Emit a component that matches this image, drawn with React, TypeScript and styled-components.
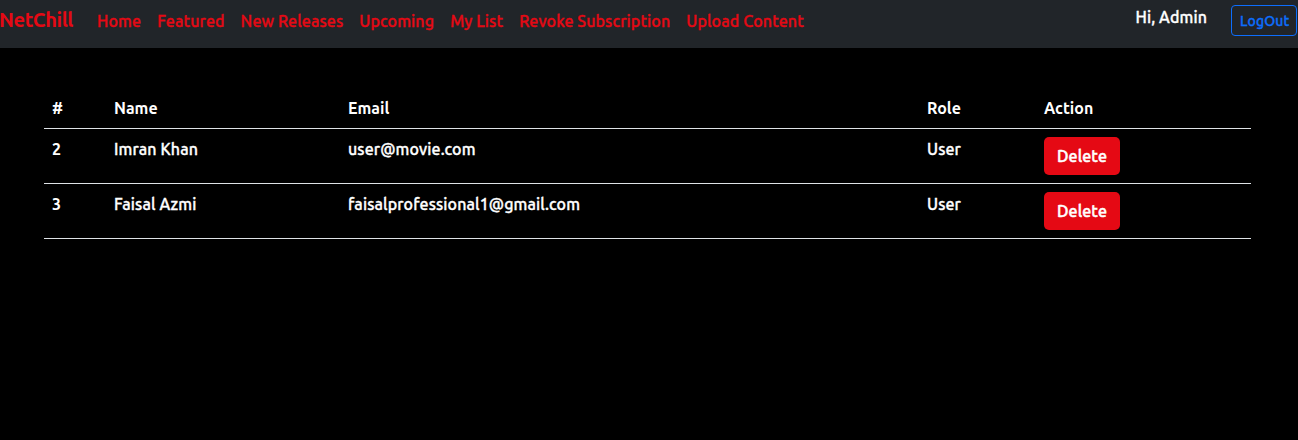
import React from "react";
import styled, { createGlobalStyle, css } from "styled-components";

const Global = createGlobalStyle`
  html, body { margin: 0; padding: 0; background: #000; }
  body {
    font-family: "Ubuntu", "Open Sans", "Noto Sans", sans-serif;
    font-size: 16px;
    line-height: 1.5;
    color: #fff;
    overflow: hidden;
  }
  * { box-sizing: border-box; }
`;

const medium = css`
  font-weight: 500;
  -webkit-text-stroke: 0.35px currentColor;
  letter-spacing: 0.12px;
`;

const Navbar = styled.nav`
  height: 48px;
  background: #212529;
  display: flex;
  align-items: flex-start;
  padding: 0 1px 0 0;
`;

const Brand = styled.a`
  font-size: 20px;
  font-weight: 700;
  color: #e50914;
  margin: 5px 16px 0 -1px;
  letter-spacing: -0.4px;
  text-decoration: none;
  line-height: 30px;
`;

const NavList = styled.ul`
  display: flex;
  list-style: none;
  margin: 0;
  padding: 0;
  flex: 1;
`;

const NavLink = styled.a`
  display: block;
  padding: 8px 8px;
  color: #e50914;
  font-size: 16px;
  line-height: 24px;
  ${medium}
  text-decoration: none;
  margin-top: 1px;
`;

const Greeting = styled.span`
  color: #fff;
  font-size: 16px;
  line-height: 24px;
  ${medium}
  margin: 5px 24px 0 0;
`;

const OutlineButton = styled.button`
  font-family: inherit;
  font-size: 14px;
  ${medium}
  line-height: 20px;
  padding: 4px 8px;
  height: 31px;
  width: 66px;
  color: #0d6efd;
  background: transparent;
  border: 1px solid #0d6efd;
  border-radius: 4px;
  margin-top: 5px;
`;

const Container = styled.main`
  padding: 40px 47px 0 44px;
`;

const Table = styled.table`
  width: 100%;
  border-collapse: collapse;
  table-layout: fixed;
`;

const Th = styled.th<{ $w: number }>`
  width: ${(p) => p.$w}px;
  text-align: left;
  padding: 8px;
  font-weight: 700;
  font-size: 16px;
  line-height: 24px;
  border-bottom: 1px solid #dee2e6;
`;

const Td = styled.td<{ $bold?: boolean }>`
  padding: 8px;
  vertical-align: top;
  font-size: 16px;
  line-height: 24px;
  ${(p) => (p.$bold ? "font-weight: 700;" : medium)}
  border-bottom: 1px solid #dee2e6;
`;

const DeleteButton = styled.button`
  font-family: inherit;
  background: #e50914;
  color: #fff;
  border: none;
  border-radius: 5px;
  width: 76px;
  height: 38px;
  font-size: 16px;
  ${medium}
  -webkit-text-stroke: 0.5px currentColor;
`;

const users = [
  { id: 2, name: "Imran Khan", email: "user@movie.com", role: "User" },
  { id: 3, name: "Faisal Azmi", email: "faisalprofessional1@gmail.com", role: "User" },
];

const links = ["Home", "Featured", "New Releases", "Upcoming", "My List", "Revoke Subscription", "Upload Content"];

export default function App() {
  return (
    <>
      <Global />
      <Navbar>
        <Brand href="#">NetChill</Brand>
        <NavList>
          {links.map((l) => (
            <li key={l}>
              <NavLink href="#">{l}</NavLink>
            </li>
          ))}
        </NavList>
        <Greeting>Hi, Admin</Greeting>
        <OutlineButton>LogOut</OutlineButton>
      </Navbar>
      <Container>
        <Table>
          <thead>
            <tr>
              <Th $w={62}>#</Th>
              <Th $w={234}>Name</Th>
              <Th $w={579}>Email</Th>
              <Th $w={117}>Role</Th>
              <Th $w={215}>Action</Th>
            </tr>
          </thead>
          <tbody>
            {users.map((u) => (
              <tr key={u.id}>
                <Td $bold>{u.id}</Td>
                <Td>{u.name}</Td>
                <Td>{u.email}</Td>
                <Td>{u.role}</Td>
                <Td>
                  <DeleteButton>Delete</DeleteButton>
                </Td>
              </tr>
            ))}
          </tbody>
        </Table>
      </Container>
    </>
  );
}
